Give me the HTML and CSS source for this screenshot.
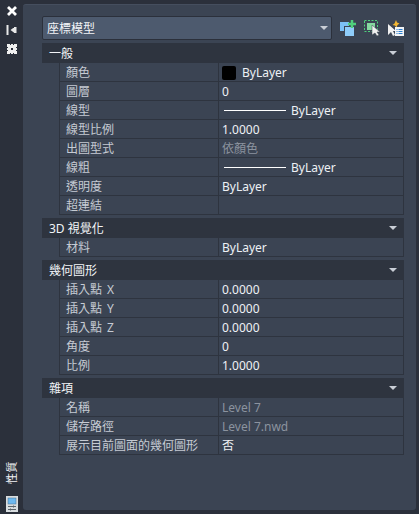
FILE: index.html
```html
<!DOCTYPE html>
<html lang="zh-Hant">
<head>
  <meta charset="UTF-8" />
  <title>性質</title>
  <link rel="stylesheet" href="styles.css">
</head>
<body>
  <div class="app">
    <div class="rail">
      <div class="rail-top">
        <svg width="14" height="14" viewBox="0 0 14 14"><path d="M3 3l8 8M11 3l-8 8" stroke="#fff" stroke-width="2.8" fill="none"/></svg>
        <svg width="14" height="14" viewBox="0 0 14 14"><path d="M2.500 2v10" stroke="#e8e8e8" stroke-width="2" fill="none"/><path d="M5.500 7l4-3v6z M9 4h2.500v6h-2.500z" fill="#e8e8e8"/></svg>
        <svg width="14" height="14" viewBox="0 0 14 14"><path fill-rule="evenodd" d="M2 2h3v1h1v-1h2v1h1v-1h3v3h-1v1h1v2h-1v1h1v3h-3v-1h-1v1h-2v-1h-1v1h-3v-3h1v-1h-1v-2h1v-1h-1z M6 6v2h2v-2z" fill="#f0f0f0"/></svg>
      </div>
      <div class="rail-bottom">
        <span class="rail-title">性質</span>
        <svg width="12" height="16" viewBox="0 0 12 16"><rect width="12" height="16" fill="#d8dde0"/><rect x="2" y="2" width="8" height="6" fill="#6cb8f0" stroke="#4a6f8c" stroke-width=".5"/><path d="M2 10.500h8M2 13.500h8" stroke="#59636b"/><path d="M7.500 9.500v2M4.500 12.500v2" stroke="#59636b"/></svg>
      </div>
    </div>

    <div class="panel">
      <div class="toolbar">
        <div class="select">
          <span>座標模型</span>
          <i class="caret"></i>
        </div>
        <svg class="tool" width="16" height="16" viewBox="0 0 16 16"><rect y="2" width="9" height="9" fill="#7cc0f5"/><rect x="4.500" y="6.500" width="10" height="10" fill="#8fcdfa" stroke="#3b4453"/><path d="M12 0v8M8 4h8" stroke="#4fd07c" stroke-width="2.500"/></svg>
        <svg class="tool" width="16" height="16" viewBox="0 0 16 16"><rect x=".5" y=".5" width="13" height="11" fill="none" stroke="#4fd07c" stroke-dasharray="2 1.500"/><rect x="3" y="3" width="8" height="7" fill="#86d8a0"/><path d="M8 5v10l3-2 2 3 2-1-2-3h3z" fill="#f0f0f0" stroke="#3b4453" stroke-width=".5"/></svg>
        <svg class="tool" width="16" height="16" viewBox="0 0 16 16"><path d="M0 4v11l3-3 2 4 2-1-2-4h3z" fill="#f0f0f0"/><path d="M8 0l1 2.500 2.500 1-2 1.500-1 2.500-1.500-2-2.500-.5 2-1.500z" fill="#f2b632"/><rect x="7" y="7" width="9" height="9" fill="#f2f4f6"/><path d="M8.500 9.500h1M10.500 9.500h4M8.500 11.500h1M10.500 11.500h4M8.500 13.500h1M10.500 13.500h4" stroke="#2a7fd0"/></svg>
      </div>

      <section class="group">
        <h3 class="group-head">一般<i class="caret"></i></h3>
        <div class="row"><span class="key">顏色</span><span class="val"><i class="swatch"></i>ByLayer</span></div>
        <div class="row"><span class="key">圖層</span><span class="val">0</span></div>
        <div class="row"><span class="key">線型</span><span class="val"><i class="line"></i>ByLayer</span></div>
        <div class="row"><span class="key">線型比例</span><span class="val">1.0000</span></div>
        <div class="row"><span class="key">出圖型式</span><span class="val muted">依顏色</span></div>
        <div class="row"><span class="key">線粗</span><span class="val"><i class="line"></i>ByLayer</span></div>
        <div class="row"><span class="key">透明度</span><span class="val">ByLayer</span></div>
        <div class="row"><span class="key">超連結</span><span class="val"></span></div>
      </section>

      <section class="group">
        <h3 class="group-head">3D 視覺化<i class="caret"></i></h3>
        <div class="row"><span class="key">材料</span><span class="val">ByLayer</span></div>
      </section>

      <section class="group">
        <h3 class="group-head">幾何圖形<i class="caret"></i></h3>
        <div class="row"><span class="key">插入點 X</span><span class="val">0.0000</span></div>
        <div class="row"><span class="key">插入點 Y</span><span class="val">0.0000</span></div>
        <div class="row"><span class="key">插入點 Z</span><span class="val">0.0000</span></div>
        <div class="row"><span class="key">角度</span><span class="val">0</span></div>
        <div class="row"><span class="key">比例</span><span class="val">1.0000</span></div>
      </section>

      <section class="group">
        <h3 class="group-head">雜項<i class="caret"></i></h3>
        <div class="row"><span class="key">名稱</span><span class="val muted">Level 7</span></div>
        <div class="row"><span class="key">儲存路徑</span><span class="val muted">Level 7.nwd</span></div>
        <div class="row"><span class="key">展示目前圖面的幾何圖形</span><span class="val">否</span></div>
      </section>
    </div>
  </div>
</body>
</html>
```

FILE: styles.css
```css
html, body {
  margin: 0;
  padding: 0;
  height: 100%;
}
body {
  background-color: #2b303b;
  font-family: "Noto Sans", "Noto Sans CJK TC", sans-serif;
  font-size: 12px;
  color: #f2f4f7;
  overflow: hidden;
}
.app {
  display: flex;
  height: 514px;
}
.rail {
  width: 23px;
  flex: none;
  display: flex;
  flex-direction: column;
  justify-content: space-between;
  align-items: center;
  padding: 4px 0 2px;
  box-sizing: border-box;
}
.rail-top {
  display: flex;
  flex-direction: column;
  gap: 5px;
}
.rail-top svg, .rail-bottom svg {
  display: block;
}
.rail-bottom {
  display: flex;
  flex-direction: column;
  align-items: center;
  gap: 12px;
}
.rail-title {
  writing-mode: vertical-rl;
  text-orientation: sideways;
  transform: rotate(180deg);
  font-size: 11px;
  line-height: 12px;
  letter-spacing: 0.5px;
}
.panel {
  flex: 1;
  margin: 4px 4px 4px 0;
  padding: 11px 12px 0 19px;
  background-color: #3b4453;
  border-radius: 3px;
  border-top: 1px solid #454e5e;
  box-sizing: border-box;
}
.toolbar {
  display: flex;
  align-items: center;
  gap: 8px;
  height: 24px;
  margin-bottom: 3px;
}
.select {
  width: 290px;
  height: 24px;
  box-sizing: border-box;
  flex: none;
  display: flex;
  align-items: center;
  justify-content: space-between;
  padding: 0 3px 0 4px;
  background-color: #4d5a6e;
  border: 1px solid #2b303b;
  border-radius: 2px;
}
.tool {
  flex: none;
}
.caret {
  display: block;
  width: 0;
  height: 0;
  border-left: 4px solid transparent;
  border-right: 4px solid transparent;
  border-top: 4px solid #c9ced6;
}
.group {
  margin-bottom: 3px;
}
.group-head {
  display: flex;
  align-items: center;
  justify-content: space-between;
  height: 20px;
  margin: 0;
  padding: 0 7px;
  background-color: #2e343f;
  font-size: 12px;
  font-weight: normal;
}
.row {
  display: flex;
  height: 19px;
  margin-left: 17px;
  border-left: 1px solid #2e343f;
  border-right: 1px solid #2e343f;
  border-bottom: 1px solid #2e343f;
  box-sizing: border-box;
  line-height: 18px;
}
.key {
  width: 159px;
  flex: none;
  padding: 1px 0 0 6px;
  box-sizing: border-box;
  color: #c6cbd3;
  white-space: nowrap;
  word-spacing: 2px;
  overflow: hidden;
  border-right: 1px solid #2e343f;
}
.val {
  flex: 1;
  display: flex;
  align-items: center;
  padding: 1px 0 0 3px;
  color: #eef1f5;
  white-space: nowrap;
}
.val.muted {
  color: #8b939f;
}
.swatch {
  width: 14px;
  height: 14px;
  background-color: #000;
  border-radius: 2px;
  margin-right: 6px;
}
.line {
  width: 62px;
  height: 1px;
  background-color: #fff;
  margin: 0 5px 0 2px;
}
```
